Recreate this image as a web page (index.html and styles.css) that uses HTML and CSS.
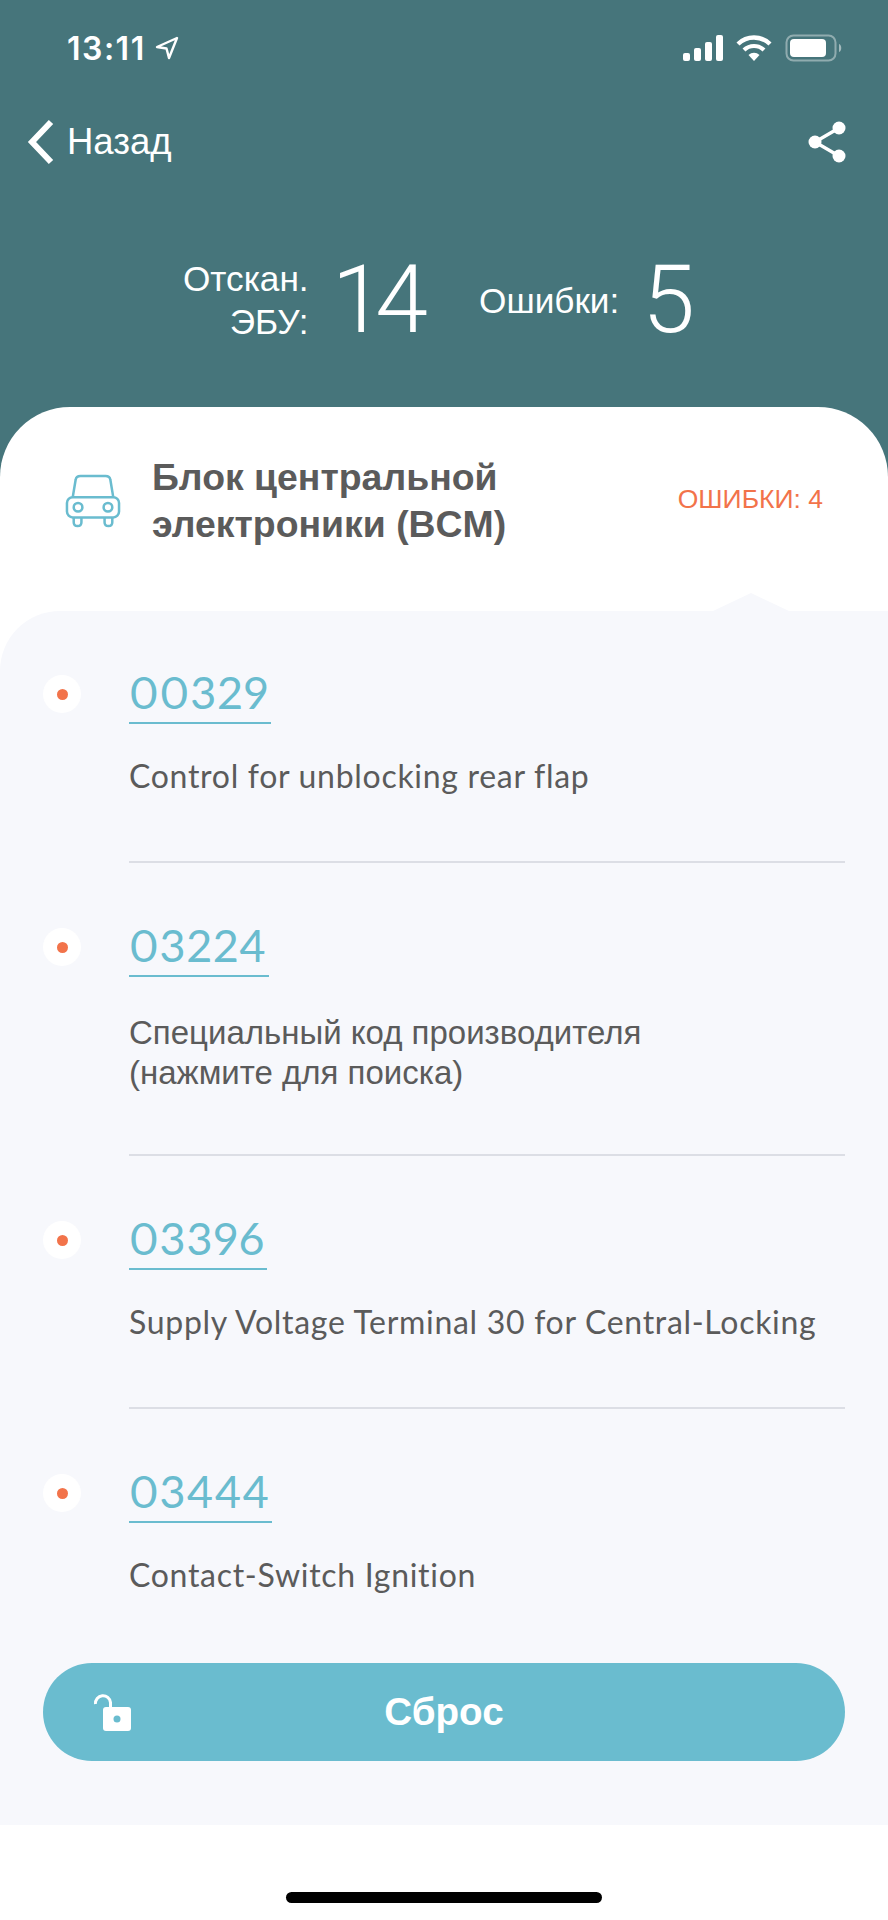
FILE: index.html
```html
<!DOCTYPE html>
<html lang="en">
  <head>
    <title>Ошибки</title>
    <link rel="stylesheet" href="styles.css">
  </head>
  <body>
    <div class="screen">
      <div class="top">
        <div class="status">
          <div class="clock">
            <span>13:11</span>
            <svg class="arrow" width="24" height="24" viewBox="0 0 24 24"><path d="M22 2 L2 11 L11.500 12.500 L14 22 Z" fill="none" stroke="#fff" stroke-width="2.400" stroke-linejoin="round"/></svg>
          </div>
          <div class="status-icons">
            <svg width="40" height="26" viewBox="0 0 40 26"><rect x="0" y="18" width="7" height="8" rx="2" fill="#fff"/><rect x="11" y="13" width="7" height="13" rx="2" fill="#fff"/><rect x="22" y="7" width="7" height="19" rx="2" fill="#fff"/><rect x="33" y="0" width="7" height="26" rx="2" fill="#fff"/></svg>
            <svg width="36" height="26" viewBox="0 0 36 26"><path d="M2 9 A23 23 0 0 1 34 9" fill="none" stroke="#fff" stroke-width="4.400"/><path d="M8 15 A14.500 14.500 0 0 1 28 15" fill="none" stroke="#fff" stroke-width="4.200"/><path d="M12.500 20 L18 26 L23.500 20 A8 8 0 0 0 12.500 20 Z" fill="#fff"/></svg>
            <svg width="58" height="28" viewBox="0 0 58 28"><rect x="1.500" y="1.500" width="49" height="25" rx="7" fill="none" stroke="#fff" stroke-opacity=".4" stroke-width="2"/><rect x="5" y="5" width="36" height="18" rx="4" fill="#fff"/><path d="M54 10 C57 11 57 17 54 18 Z" fill="#fff" fill-opacity=".5"/></svg>
          </div>
        </div>
        <div class="nav">
          <div class="back">
            <svg width="30" height="46" viewBox="0 0 30 46"><path d="M25 3 L6 23 L25 43" fill="none" stroke="#fff" stroke-width="6"/></svg>
            <span>Назад</span>
          </div>
          <svg class="share" width="38" height="42" viewBox="0 0 38 42"><path d="M31 7 L7 21 L31 35" fill="none" stroke="#fff" stroke-width="3.400"/><circle cx="31" cy="7" r="6.500" fill="#fff"/><circle cx="7" cy="21" r="6.500" fill="#fff"/><circle cx="31" cy="35" r="6.500" fill="#fff"/></svg>
        </div>
        <div class="counts">
          <div class="count-label">Отскан.<br>ЭБУ:</div>
          <div class="count-num">14</div>
          <div class="count-label errs">Ошибки:</div>
          <div class="count-num">5</div>
        </div>
      </div>

      <div class="card">
        <div class="block">
          <svg class="car" width="56" height="54" viewBox="0 0 58 56" fill="none" stroke="#6abccf" stroke-width="2.600">
            <path d="M8 24 L11 6 Q11.500 2 16 2 H42 Q46.500 2 47 6 L50 24"/>
            <rect x="2" y="24" width="54" height="21" rx="6"/>
            <circle cx="13.500" cy="34.500" r="4.500"/>
            <circle cx="44.500" cy="34.500" r="4.500"/>
            <path d="M9 45 V50 Q9 54 13 54 Q17 54 17 50 V45"/>
            <path d="M41 45 V50 Q41 54 45 54 Q49 54 49 50 V45"/>
          </svg>
          <div class="block-name">Блок центральной<br>электроники (BCM)</div>
          <div class="block-errs">ОШИБКИ: 4</div>
        </div>

        <div class="panel">
          <div class="notch"></div>
          <div class="row">
            <div class="mark"><i></i></div>
            <div class="row-body">
              <a class="code">00329</a>
              <p class="en">Control for unblocking rear flap</p>
            </div>
          </div>
          <div class="row">
            <div class="mark"><i></i></div>
            <div class="row-body">
              <a class="code">03224</a>
              <p class="ru">Специальный код производителя<br>(нажмите для поиска)</p>
            </div>
          </div>
          <div class="row">
            <div class="mark"><i></i></div>
            <div class="row-body">
              <a class="code">03396</a>
              <p class="en">Supply Voltage Terminal 30 for Central-Locking</p>
            </div>
          </div>
          <div class="row last">
            <div class="mark"><i></i></div>
            <div class="row-body">
              <a class="code">03444</a>
              <p class="en">Contact-Switch Ignition</p>
            </div>
          </div>
          <div class="reset">
            <svg class="lock" width="38" height="38" viewBox="0 0 38 38"><path d="M2.500 11 A7.500 7.500 0 0 1 17.500 9.500 V15" fill="none" stroke="#fff" stroke-width="3"/><rect x="10" y="14" width="28" height="24" rx="3" fill="#fff"/><circle cx="24" cy="26" r="3.500" fill="#6abccf"/></svg>
            <span>Сброс</span>
          </div>
        </div>

        <div class="home"><div class="home-bar"></div></div>
      </div>
    </div>
  </body>
</html>
```

FILE: styles.css
```css
* {
  margin: 0;
  box-sizing: border-box;
}
body {
  width: 888px;
  height: 1920px;
  overflow: hidden;
  background-color: #46757b;
  font-family: "Liberation Sans", Arial, sans-serif;
}
.screen {
  height: 1920px;
  display: flex;
  flex-direction: column;
}
.top {
  height: 407px;
  flex-shrink: 0;
  color: #fff;
}
.status {
  height: 48px;
  margin-top: 24px;
  padding: 0 45px 0 67px;
  display: flex;
  justify-content: space-between;
  align-items: center;
}
.clock {
  display: flex;
  align-items: center;
  gap: 9px;
  font-family: Inter, sans-serif;
  font-size: 32px;
  font-weight: 600;
  letter-spacing: 1.5px;
}
.status-icons {
  display: flex;
  align-items: center;
  gap: 13px;
}
.nav {
  height: 46px;
  margin-top: 47px;
  padding: 0 42px 0 26px;
  display: flex;
  justify-content: space-between;
  align-items: center;
}
.back {
  display: flex;
  align-items: center;
  gap: 11px;
  font-size: 36.5px;
}
.counts {
  margin-top: 87px;
  padding-left: 183px;
  display: flex;
  align-items: center;
}
.count-label {
  font-size: 35.2px;
  line-height: 43px;
  text-align: right;
}
.count-num {
  font-family: Roboto, sans-serif;
  font-weight: 300;
  font-size: 95px;
  line-height: 96px;
  letter-spacing: -9px;
  margin-left: 23px;
}
.errs {
  margin-left: 60px;
}
.card {
  flex: 1;
  background-color: #fff;
  border-radius: 70px 70px 0 0;
  display: flex;
  flex-direction: column;
}
.block {
  height: 204px;
  padding: 0 65px 17px 65px;
  display: flex;
  align-items: center;
}
.car {
  flex-shrink: 0;
}
.block-name {
  margin-left: 31px;
  font-size: 37.4px;
  line-height: 46.5px;
  font-weight: bold;
  color: #5b5b5b;
}
.block-errs {
  margin-left: auto;
  margin-bottom: 2px;
  font-size: 26.5px;
  color: #f2734a;
}
.panel {
  position: relative;
  flex: 1;
  padding: 50px 43px 0 43px;
  background-color: #f7f8fc;
  border-radius: 60px 0 0 0;
}
.notch {
  position: absolute;
  top: -18px;
  left: 713px;
  width: 76px;
  height: 18px;
  background-color: #f7f8fc;
  clip-path: polygon(0 100%, 50% 0, 100% 100%);
}
.row {
  display: flex;
  align-items: flex-start;
}
.mark {
  width: 38px;
  height: 38px;
  margin-top: 14px;
  margin-right: 48px;
  flex-shrink: 0;
  border-radius: 50%;
  background-color: #fff;
  display: flex;
  align-items: center;
  justify-content: center;
}
.mark i {
  width: 11px;
  height: 11px;
  border-radius: 50%;
  background-color: #f2734a;
}
.row-body {
  flex: 1;
  padding-bottom: 65px;
  margin-bottom: 51px;
  border-bottom: 2px solid #dcdee5;
}
.last .row-body {
  border-bottom: 0;
  padding-bottom: 0;
  margin-bottom: 68px;
}
.code {
  display: inline-block;
  padding: 2px 2px 1px 0;
  font-family: Lato, sans-serif;
  font-size: 45px;
  line-height: 58px;
  letter-spacing: 1px;
  font-variant-numeric: proportional-nums;
  color: #6abccf;
  border-bottom: 2px solid #6abccf;
}
.row-body p {
  margin-top: 32px;
  font-size: 33px;
  line-height: 40px;
  color: #5b5b5b;
}
.row-body p.ru {
  margin-top: 36px;
  margin-bottom: -4px;
}
.row-body p.en {
  font-family: Lato, sans-serif;
  font-size: 32px;
  letter-spacing: 0.7px;
}
.reset {
  position: relative;
  height: 98px;
  border-radius: 49px;
  background-color: #6abccf;
  display: flex;
  align-items: center;
  justify-content: center;
  color: #fff;
  font-size: 38.6px;
  font-weight: bold;
}
.lock {
  position: absolute;
  left: 50px;
  top: 30px;
}
.home {
  height: 95px;
  flex-shrink: 0;
  padding-top: 67px;
  display: flex;
  justify-content: center;
}
.home-bar {
  width: 316px;
  height: 11px;
  border-radius: 6px;
  background-color: #000;
}
```
